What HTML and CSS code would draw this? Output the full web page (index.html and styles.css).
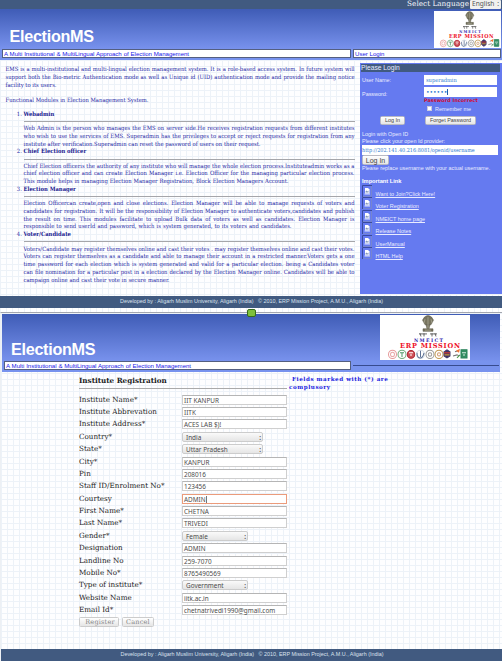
FILE: index.html
```html
<!DOCTYPE html>
<html lang="en">
<head>
<meta charset="utf-8">
<title>ElectionMS</title>
<link rel="stylesheet" href="styles.css">
</head>
<body>
<svg class="defs" width="0" height="0" aria-hidden="true">
  <symbol id="logo" viewBox="0 0 90 44">
    <rect width="90" height="44" fill="#fff"/>
    <g fill="#77745f" stroke="#555443" stroke-width=".5">
      <path d="M44.500 2q3.500-3 7 0l2 3-2.500 4.500h-6l-2.500-4.500z"/>
      <path d="M46 9.500h4l-1 4h-2zM43 13.500h10v2.500H43z"/>
      <path d="M45 4l-1 4M51 4l1 4M48 2v12M45 14.800h6" stroke="#c5c3af" fill="none"/>
    </g>
    <path d="M39 18.500h8M50 18.500h7M40 18l1 3M44 18v3M52 18v3M55 18l1 3" stroke="#444" stroke-width=".8"/>
    <g stroke-width="1" fill="#fff">
      <circle cx="12.500" cy="38.500" r="4" stroke="#e69a9a"/><circle cx="12.500" cy="38.500" r="2" stroke="#e9aaa8"/>
      <circle cx="22" cy="38.500" r="4" stroke="#71ad7c"/><path d="M20 37h4M22 37v4" stroke="#4b9865"/>
      <circle cx="31" cy="38.500" r="3.700" stroke="#ac2633" fill="#ce5259"/><path d="M29 37h4M30 39h2" stroke="#fff"/>
      <circle cx="40.500" cy="38.500" r="4" stroke="#d5dce5"/><path d="M37 37q0 5 3 5t4-5M40.500 35v6" stroke="#5d7195" fill="none"/>
      <circle cx="50" cy="38.500" r="4" stroke="#999"/><circle cx="50" cy="38.500" r="1.700" stroke="#999"/>
      <circle cx="59" cy="38.500" r="4" stroke="#c19851"/><circle cx="59" cy="38.500" r="1.500" stroke="#d0996e"/>
      <path d="M64 36l3-2 3 2v4l-3 2-3-2z" fill="#3f3268" stroke="#453a68"/><path d="M64 37h6" stroke="#ed3d22"/><path d="M64.500 39h5" stroke="#eab329"/>
      <path d="M73 40l4-1 2 1M75 36l3-1" stroke="#777" fill="none"/><path d="M76 35l4-2-1 4" fill="#f27535"/><path d="M77 42l3-3" stroke="#4a9a48"/>
      <path d="M81 34h6v8h-6z" fill="#348e63" stroke="#29835a"/><path d="M82 37h4M83 39h2" stroke="#d8eee4"/>
    </g>
  </symbol>
  <symbol id="doc" viewBox="0 0 10 12">
    <path d="M.5 12V.5H10" fill="none" stroke="#394a9e"/><path d="M9.500 1v10.500H1" fill="none" stroke="#7685cf"/>
    <path d="M3 3h3l1.500 1.500V8.500H3z" fill="#fff"/><path d="M3.500 6.500l1-1 1 1 1-1v2h-3z" fill="#8295b9"/><path d="M2.500 9h5.500" stroke="#dfe5ff"/>
  </symbol>
</svg>

<section class="home">
  <div class="topbar"><span class="lang">Select Language</span><span class="langsel">English <i>:</i></span></div>
  <header class="banner">
    <h1>ElectionMS</h1>
    <svg class="logo" viewBox="0 0 90 44" preserveAspectRatio="none"><use href="#logo" width="90" height="44"/><text class="nme" x="34" y="26" textLength="29">NMEICT</text><text class="erp" x="20" y="32.500" textLength="60">ERP MISSION</text></svg>
  </header>
  <div class="strip"><div class="tag"><span class="fit">A Multi Institutional &amp; MultiLingual Approach of Election Management</span></div><div class="ulogin">User Login</div></div>
  <div class="main">
    <article>
      <p>EMS is a multi-institutional and multi-lingual election management system. It is a role-based access system. In future system will</p>
      <p>support both the Bio-metric Authentication mode as well as Unique id (UID) authentication mode and provide the mailing notice</p>
      <p class="w51">facility to its users.</p>
      <p class="w142 gap">Functional Modules in Election Management System.</p>
      <ol>
        <li><b>Webadmin</b><hr>
          <p>Web Admin is the person who manages the EMS on server side.He receives registration requests from different institutes</p>
          <p>who wish to use the services of EMS. Superadmin has the privileges to accept or reject requests for registration from any</p>
          <p class="w236">institute after verification.Superadmin can reset the password of users on their request.</p></li>
        <li><b>Chief Election officer</b><hr>
          <p>Chief Election officeris the authority of any institute who will manage the whole election process.Instituteadmin works as a</p>
          <p>chief election officer and can create Election Manager i.e. Election Officer for the managing particular election process.</p>
          <p class="w264">This module helps in managing Election Manager Registration, Block Election Managers Account.</p></li>
        <li><b>Election Manager</b><hr>
          <p>Election Officercan create,open and close elections. Election Manager will be able to manage requests of voters and</p>
          <p>candidates for registration. It will be the responsibility of Election Manager to authenticate voters,candidates and publish</p>
          <p>the result on time. This modules facilitate to upload Bulk data of voters as well as candidates. Election Manager is</p>
          <p class="w268">responsible to send userId and password, which is system generated, to its voters and candidates.</p></li>
        <li><b>Voter/Candidate</b><hr>
          <p>Voters/Candidate may register themselves online and cast their votes . may register themselves online and cast their votes.</p>
          <p>Voters can register themselves as a candidate and able to manage their account in a restricted manner.Voters gets a one</p>
          <p>time password for each election which is system generated and valid for a particular election. being a Candidates voter</p>
          <p>can file nomination for a particular post in a election declared by the Election Manager online. Candidates will be able to</p>
          <p class="w146">campaign online and cast their vote in secure manner.</p></li>
      </ol>
    </article>
    <aside>
      <h2>Please Login</h2>
      <div class="cred"><label>User Name:</label><span class="in">superadmin</span></div>
      <div class="cred pw"><label>Password:</label><span class="in dots">••••••<i></i></span></div>
      <div class="err">Password Incorrect</div>
      <div class="remember"><i></i>Remember me</div>
      <div class="btns"><span class="btn b1">Log In</span><span class="btn b2">Forget Password</span></div>
      <div class="t">Login with Open ID</div>
      <div class="t t2">Please click your open Id provider:</div>
      <div class="in url">http://202.141.40.216:8081/openid/username</div>
      <div class="btn b3">Log In</div>
      <div class="t t3">Please replace username with your actual username.</div>
      <h3>Important Link</h3>
      <ul>
        <li><svg><use href="#doc"/></svg><a>Want to Join?Click Here!</a></li>
        <li><svg><use href="#doc"/></svg><a>Voter Registration</a></li>
        <li><svg><use href="#doc"/></svg><a>NMEICT home page</a></li>
        <li><svg><use href="#doc"/></svg><a>Release Notes</a></li>
        <li><svg><use href="#doc"/></svg><a>UserManual</a></li>
        <li><svg><use href="#doc"/></svg><a>HTML Help</a></li>
      </ul>
    </aside>
  </div>
  <footer><span>Developed by : Aligarh Muslim University, Aligarh (India) &nbsp; © 2010, ERP Mission Project, A.M.U., Aligarh (India)</span></footer>
</section>

<section class="reg">
  <i class="handle"></i>
  <header class="banner">
    <h1>ElectionMS</h1>
    <svg class="logo" viewBox="0 0 90 44" preserveAspectRatio="none"><use href="#logo" width="90" height="44"/><text class="nme" x="34" y="26" textLength="29">NMEICT</text><text class="erp" x="20" y="32.500" textLength="60">ERP MISSION</text></svg>
  </header>
  <div class="strip"><div class="tag"><span class="fit">A Multi Institutional &amp; MultiLingual Approach of Election Management</span></div><div class="rule"></div></div>
  <div class="formwrap">
    <div class="formhead"><h2>Institute Registration</h2><div class="note"><span>Fields marked with (*) are</span><br>complusory</div></div>
    <div class="row"><label>Institute Name*</label><span class="f">IIT KANPUR</span></div>
    <div class="row"><label>Institute Abbrevation</label><span class="f">IITK</span></div>
    <div class="row"><label>Institute Address*</label><span class="f">ACES LAB $)!</span></div>
    <div class="row"><label>Country*</label><span class="f sel">India</span></div>
    <div class="row"><label>State*</label><span class="f sel">Uttar Pradesh</span></div>
    <div class="row"><label>City*</label><span class="f">KANPUR</span></div>
    <div class="row"><label>Pin</label><span class="f">208016</span></div>
    <div class="row"><label>Staff ID/Enrolment No*</label><span class="f">123456</span></div>
    <div class="row"><label>Courtesy</label><span class="f focus">ADMIN<i></i></span></div>
    <div class="row"><label>First Name*</label><span class="f">CHETNA</span></div>
    <div class="row"><label>Last Name*</label><span class="f">TRIVEDI</span></div>
    <div class="row"><label>Gender*</label><span class="f sel short">Female</span></div>
    <div class="row"><label>Designation</label><span class="f">ADMIN</span></div>
    <div class="row"><label>Landline No</label><span class="f">259-7070</span></div>
    <div class="row"><label>Mobile No*</label><span class="f">8765490569</span></div>
    <div class="row"><label>Type of institute*</label><span class="f sel short">Government</span></div>
    <div class="row"><label>Website Name</label><span class="f">iitk.ac.in</span></div>
    <div class="row"><label>Email Id*</label><span class="f mail">chetnatrivedi1990@gmail.com</span></div>
    <div class="actions"><span class="btn">Register</span><span class="btn">Cancel</span></div>
  </div>
  <footer><span>Developed by : Aligarh Muslim University, Aligarh (India) &nbsp; © 2010, ERP Mission Project, A.M.U., Aligarh (India)</span></footer>
</section>
</body>
</html>
```
FILE: styles.css
```css
* { box-sizing: border-box; }
body { margin: 0; width: 502px; height: 661px; overflow: hidden; background: #fff; font-family: "Liberation Sans", sans-serif; white-space: nowrap; }
h1, h2, h3, p, ul, ol { margin: 0; padding: 0; }
.defs { position: absolute; }
section { display: flex; flex-direction: column; background-color: #fefeff; background-image: linear-gradient(90deg, #edf2f8 1px, transparent 1px), linear-gradient(#edf2f8 1px, transparent 1px); background-size: 6px 6px; }
.home { height: 312px; }
.topbar { height: 9px; background: #415a80; display: flex; justify-content: flex-end; font: 7.300px/8px "DejaVu Serif", serif; color: #f4f6fa; }
.langsel { width: 31px; height: 9px; margin: 0 1px 0 1px; background: #f0f0ef; color: #555; font: 6.600px/8px "Noto Sans", sans-serif; padding-left: 2px; border-radius: 1px; }
.langsel i { font-style: normal; float: right; margin-right: 2px; }
.banner { display: flex; justify-content: space-between; background: linear-gradient(#3f5cb6, #7892ed); }
.home .banner { height: 40px; padding: 2px 1px 0 9.500px; }
h1 { font: bold 16.200px/20px "Liberation Sans", sans-serif; letter-spacing: -.3px; color: #fff; }
.home h1 { margin-top: 15px; }
.nme, .erp { font-family: "DejaVu Serif", serif; font-weight: bold; font-size: 4.600px; fill: #2d20ac; }
.erp { font-size: 6.600px; fill: #ee1028; }
.home .logo { width: 67px; height: 37px; background: #fff; }
.strip { height: 11px; display: flex; gap: 2px; padding: 0 1px 2px 2px; background: #7893ee; }
.tag, .ulogin { height: 9px; border: 1px solid #545f80; background: #fff; font-size: 6.100px; line-height: 8px; color: #1717e8; padding-left: 1px; }
.tag { width: 349px; }
.fit { display: block; width: 185px; letter-spacing: -.04px; text-align-last: justify; }
.ulogin { flex: 1; }
.main { height: 236px; display: flex; justify-content: space-between; }
article { width: 350px; margin: 6.200px 0 0 5.500px; font: 5.850px/7.750px "DejaVu Serif Condensed", "DejaVu Serif", serif; font-stretch: condensed; color: #2427a4; }
article p { width: 349px; text-align-last: justify; height: 7.750px; }
article li p { width: 331px; }
article .w51 { width: 51px; }
article .w142 { width: 142px; }
article .w236 { width: 237px; }
article .w264 { width: 265px; }
article .w268 { width: 268px; }
article .w146 { width: 146px; }
.gap { margin-top: 7.500px; }
ol { margin-top: 6px; padding-left: 18px; }
ol b { display: block; height: 7.750px; color: #1a1a90; }
hr { width: 331px; margin: 2.500px 0 3.100px; border: 0; height: 1px; background: #a5a6aa; }
aside { width: 142px; height: 231px; margin-top: 3px; padding: 1px 2px; background: #657af0; color: #e9ecff; font-size: 5.450px; line-height: 7px; }
aside h2 { height: 8px; margin-left: -1px; background: #415a80; font: 6.700px/8px "Liberation Sans", sans-serif; }
.cred { display: flex; margin-top: 3px; height: 10px; line-height: 10px; justify-content: space-between; padding-right: 3px; }
.pw { margin-top: 2px; line-height: 15px; }
.in { display: block; width: 73px; height: 10px; background: #fff; color: #2d79cf; font: 5.700px/10px "DejaVu Serif Condensed", serif; font-stretch: condensed; padding-left: 2px; }
.dots { font: 6px/10px "DejaVu Sans", sans-serif; }
.dots i { display: inline-block; width: 1px; height: 6px; background: #225cac; vertical-align: -1px; }
.err { margin: 0 0 0 62px; color: #d20c30; font: bold 4.900px/7px "DejaVu Sans", sans-serif; letter-spacing: .05px; height: 6px; }
.remember { display: flex; gap: 3px; margin: 3px 0 0 65px; height: 7px; }
.remember i { width: 5px; height: 5px; background: #fff; border: 1px solid #ccd; }
.btns { display: flex; gap: 20px; margin: 3px 0 0 18px; }
.btn { display: block; background: linear-gradient(#fff, #e5e5e5); border: 1px solid #b9bac4; border-radius: 1.500px; color: #444; text-align: center; }
.b1, .b2 { height: 9px; line-height: 7px; }
.b1 { width: 25px; }
.b2 { width: 51px; }
.t { margin-top: 6px; height: 7px; line-height: 7px; }
.t2, .t3 { margin-top: 0; }
.url { width: 136px; padding-left: 0; font-size: 5.450px; }
.b3 { width: 27px; height: 10px; line-height: 9px; font-size: 7px; }
h3 { margin-top: 6px; font: bold 5.700px/7px "Liberation Sans", sans-serif; color: #fff; }
ul { list-style: none; }
ul li { height: 12.400px; display: flex; gap: 3.500px; line-height: 18.500px; }
ul svg { width: 10px; height: 12px; flex: none; }
a { text-decoration: underline; }
footer { height: 12px; background: #415a80; color: #dbe2ee; text-align: center; font-size: 5.400px; line-height: 11px; }
footer span { display: inline-block; width: 262px; text-align-last: justify; }
.reg { position: relative; height: 349px; border-top: 1px solid #a3a6ae; border-left: 1px solid #edf0f4; }
.handle { position: absolute; left: 246px; top: -4px; width: 9px; height: 8px; border: 1px solid #356b1b; border-radius: 2px; background: #7ec03c; }
.reg .banner { margin: 1px 2px 0 1px; height: 47px; padding: 1px 30px 0 9px; }
.reg h1 { margin-top: 24px; }
.reg .logo { width: 90px; height: 45px; }
.reg .strip { margin: 0 2px 0 1px; }
.reg .tag { width: 347px; }
.rule { flex: 1; height: 1px; margin-top: 4px; background: #374b8f; }
.formwrap { height: 277px; padding: 4px 0 0 78px; font-family: "DejaVu Serif", serif; color: #222; }
.formhead { display: flex; height: 17.500px; }
.formhead h2 { width: 208px; height: 13px; font: bold 7.200px/10px "DejaVu Serif", serif; border-bottom: 1px solid #aaa; }
.note { margin-left: 2px; font: bold 5.600px/7.500px "DejaVu Serif", serif; letter-spacing: .54px; color: #1a1ae0; }
.note span { margin-left: 3px; }
.row { display: flex; height: 12.380px; align-items: center; }
.row label { width: 103px; font-size: 7.200px; line-height: 12px; }
.f { display: block; width: 105px; height: 10px; border: 1px solid #cfcfcf; border-top-color: #b5b5b5; background: #fff; font: 6.400px/9px "Noto Sans", sans-serif; color: #4b4b4b; padding-left: 1px; }
.sel { width: 81px; background: linear-gradient(#fafafa, #e5e5e5); border-color: #ccc; border-radius: 2px; padding-left: 3px; }
.sel::after { content: ":"; float: right; margin-right: 1px; font-weight: bold; }
.short { width: 66px; }
.focus { border-color: #eb9b7b; }
.focus i { display: inline-block; width: 1px; height: 7px; background: #777; vertical-align: -1px; }
.actions { display: flex; gap: 3px; margin-top: 1px; }
.actions .btn { height: 10px; width: 40px; font-size: 6.500px; line-height: 8px; color: #858585; border-color: #ccc; letter-spacing: .2px; padding-left: 2px; }
.actions .btn + .btn { width: 32px; padding: 0; }
```
